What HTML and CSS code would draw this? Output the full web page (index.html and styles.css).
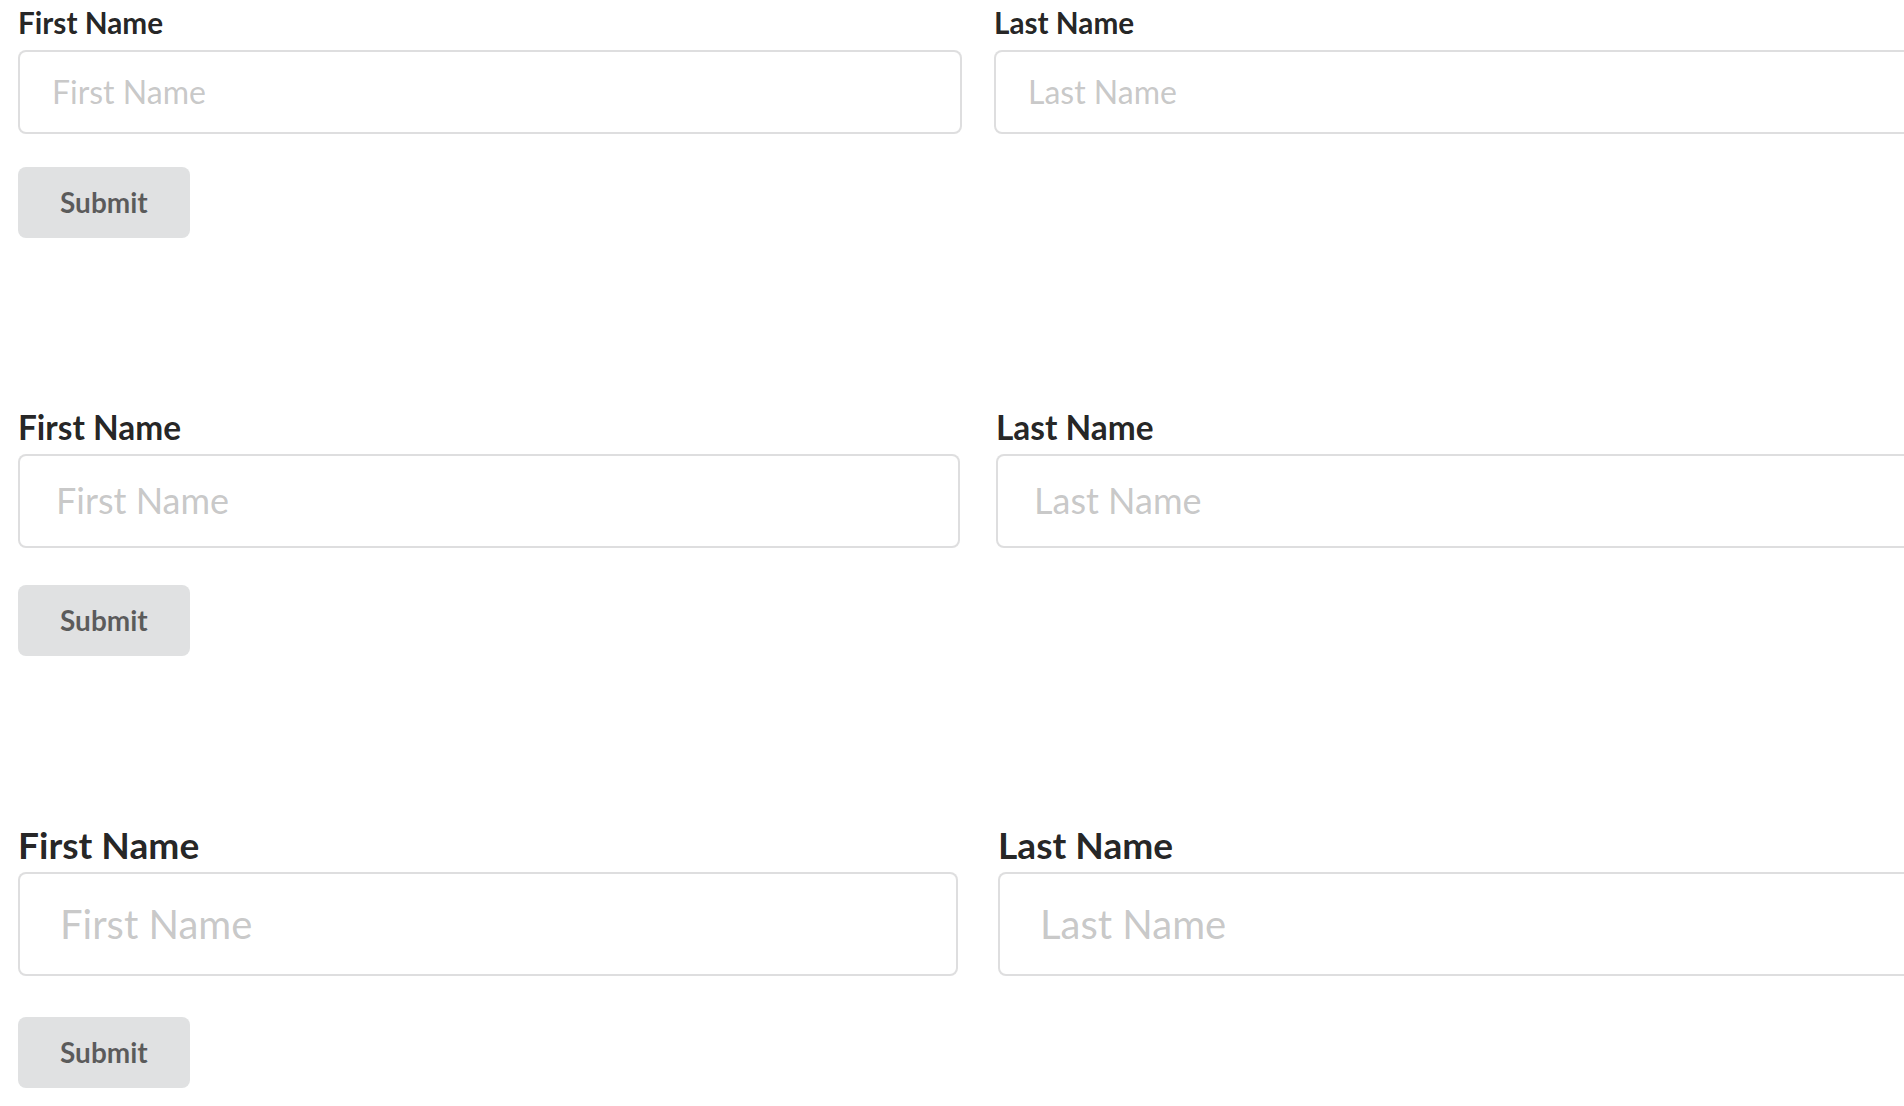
FILE: index.html
```html
<!DOCTYPE html>
<html lang="en">
<head>
<meta charset="utf-8">
<title>Forms</title>
<link rel="stylesheet" href="styles.css">
</head>
<body>
<div class="page">
  <form class="form form-large">
    <div class="fields">
      <div class="field">
        <label>First Name</label>
        <input type="text" placeholder="First Name">
      </div>
      <div class="field">
        <label>Last Name</label>
        <input type="text" placeholder="Last Name">
      </div>
    </div>
    <button class="btn" type="button">Submit</button>
  </form>
  <form class="form form-big">
    <div class="fields">
      <div class="field">
        <label>First Name</label>
        <input type="text" placeholder="First Name">
      </div>
      <div class="field">
        <label>Last Name</label>
        <input type="text" placeholder="Last Name">
      </div>
    </div>
    <button class="btn" type="button">Submit</button>
  </form>
  <form class="form form-huge">
    <div class="fields">
      <div class="field">
        <label>First Name</label>
        <input type="text" placeholder="First Name">
      </div>
      <div class="field">
        <label>Last Name</label>
        <input type="text" placeholder="Last Name">
      </div>
    </div>
    <button class="btn" type="button">Submit</button>
  </form>
</div>
</body>
</html>
```

FILE: styles.css
```css
html {
  overflow: hidden;
}

body {
  margin: 0;
  background: #ffffff;
  font-family: Lato, "Helvetica Neue", Arial, sans-serif;
  font-size: 28px;
  line-height: 40px;
  color: rgba(0, 0, 0, 0.87);
}

.page {
  width: 1920px;
  padding: 2px 0 0 18px;
}

.form {
  margin: 0 0 168px;
}

.form:last-child {
  margin-bottom: 0;
}

.form-large { font-size: 32px; }
.form-big { font-size: 36px; }
.form-huge { font-size: 40px; }

.fields {
  display: flex;
  margin: 0 -0.5em calc(1em + 1px);
}

.field {
  flex: 0 0 50%;
  box-sizing: border-box;
  padding: 0 0.5em;
}

.field label {
  display: block;
  margin: 0 0 7px;
  padding-top: 1px;
  font-size: 0.92857143em;
  font-weight: 700;
  line-height: 40px;
  color: rgba(0, 0, 0, 0.87);
}

.field input {
  display: block;
  width: 100%;
  box-sizing: border-box;
  margin: 0;
  padding: 0.64285714em 1em;
  font-family: Lato, "Helvetica Neue", Arial, sans-serif;
  font-size: 1em;
  line-height: 1.21428571em;
  color: rgba(0, 0, 0, 0.87);
  background: #ffffff;
  border: 2px solid rgba(34, 36, 38, 0.15);
  border-radius: 8px;
  outline: none;
}

.field input::placeholder {
  color: rgba(191, 191, 191, 0.87);
}

.btn {
  display: inline-block;
  margin: 0;
  padding: 21px 42px 22px;
  font-family: Lato, "Helvetica Neue", Arial, sans-serif;
  font-size: 28px;
  font-weight: 700;
  line-height: 28px;
  color: rgba(0, 0, 0, 0.6);
  background: #e0e1e2;
  border: 0;
  border-radius: 8px;
}
```
